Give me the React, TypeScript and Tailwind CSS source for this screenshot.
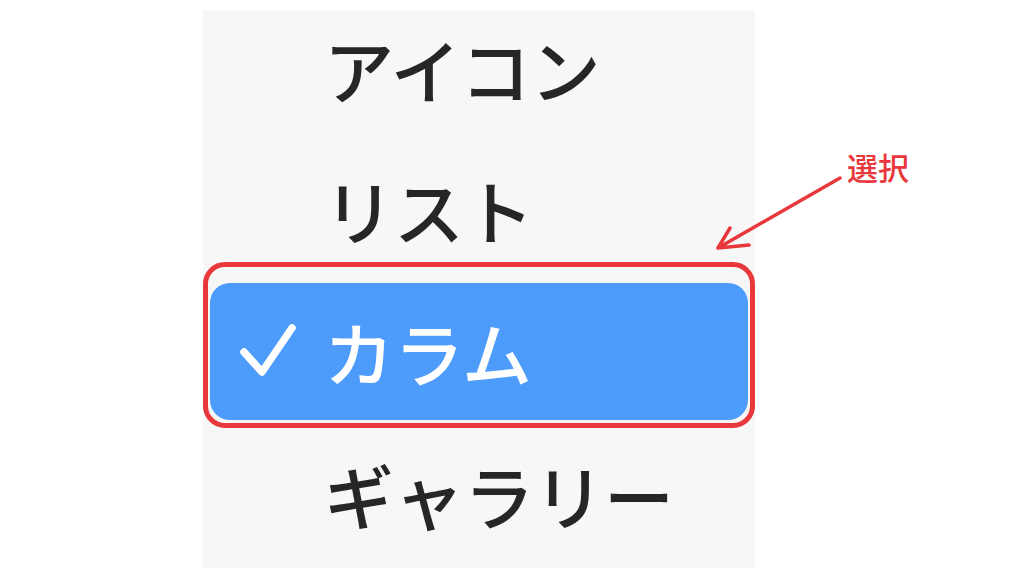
const jp = { fontFamily: '"Noto Sans CJK JP", "Noto Sans", sans-serif' }

function MenuItem({ label, className = '' }: { label: string; className?: string }) {
  return (
    <div className={`h-[70px] pl-[121px] text-[70px] leading-[70px] font-medium text-[#262626] whitespace-nowrap ${className}`}>
      {label}
    </div>
  )
}

function CheckIcon() {
  return (
    <svg width="56" height="56" viewBox="0 0 56 56" className="shrink-0">
      <polyline
        points="4,28 22,48 52,4"
        fill="none"
        stroke="white"
        strokeWidth="7.5"
        strokeLinecap="round"
        strokeLinejoin="round"
      />
    </svg>
  )
}

export default function App() {
  return (
    <div className="relative w-[1024px] h-[576px] overflow-hidden bg-white pt-[10px] pl-[203px]" style={jp}>
      <div className="w-[552px] h-[558px] bg-[#f7f7f7] flex flex-col">
        <MenuItem label="アイコン" className="mt-[24px]" />
        <MenuItem label="リスト" className="mt-[71px]" />

        <div className="mt-[17px] h-[166px] border-[5px] border-[#e8383b] rounded-[22px] pt-[16px] pb-[3px] px-[2px]">
          <div className="h-[137px] rounded-[20px] bg-[#4d9bfb] flex items-center pl-[30px]">
            <CheckIcon />
            <span className="ml-[28px] text-[70px] leading-[70px] font-medium text-white whitespace-nowrap">カラム</span>
          </div>
        </div>

        <MenuItem label="ギャラリー" className="mt-[32px]" />
      </div>

      {/* annotation */}
      <div className="absolute left-[847px] top-[151px] text-[31px] leading-none font-medium text-[#e8383b]">選択</div>
      <svg className="absolute inset-0 pointer-events-none" width="1024" height="576" viewBox="0 0 1024 576">
        <path
          d="M840 178 L718 248 M718 248 L730 228 M718 248 L749 245"
          fill="none"
          stroke="#e8383b"
          strokeWidth="3.5"
          strokeLinecap="round"
          strokeLinejoin="round"
        />
      </svg>
    </div>
  )
}
